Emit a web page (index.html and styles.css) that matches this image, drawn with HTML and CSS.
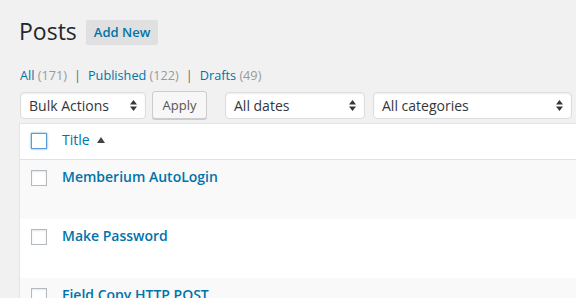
FILE: index.html
```html
<!DOCTYPE html>
<html>
<head>
<meta charset="utf-8">
<link rel="stylesheet" href="styles.css">
</head>
<body>
<div class="wrap">
  <div class="heading">
    <h1 class="page-title">Posts</h1>
    <a class="add-new">Add New</a>
  </div>
  <ul class="subsubsub">
    <li><a class="current">All <span class="count">(171)</span></a><span class="sep">|</span></li>
    <li><a>Published <span class="count">(122)</span></a><span class="sep">|</span></li>
    <li><a>Drafts <span class="count">(49)</span></a></li>
  </ul>
  <div class="tablenav">
    <div class="select w-bulk"><span>Bulk Actions</span><svg width="7" height="11" viewBox="0 0 7 11"><path d="M3.5 0L7 4.5H0z M3.5 11L0 6.5h7z" fill="#32373c"/></svg></div>
    <button class="button">Apply</button>
    <div class="select w-dates"><span>All dates</span><svg width="7" height="11" viewBox="0 0 7 11"><path d="M3.5 0L7 4.5H0z M3.5 11L0 6.5h7z" fill="#32373c"/></svg></div>
    <div class="select w-cats"><span>All categories</span><svg width="7" height="11" viewBox="0 0 7 11"><path d="M3.5 0L7 4.5H0z M3.5 11L0 6.5h7z" fill="#32373c"/></svg></div>
  </div>
  <div class="list-table">
    <div class="thead">
      <span class="cb cb-focus"></span>
      <a class="col-title">Title</a>
      <svg class="sort" width="8" height="6" viewBox="0 0 8 6"><path d="M4 0L8 6H0z" fill="#444"/></svg>
    </div>
    <div class="row alt">
      <span class="cb"></span>
      <a class="row-title">Memberium AutoLogin</a>
    </div>
    <div class="row">
      <span class="cb"></span>
      <a class="row-title">Make Password</a>
    </div>
    <div class="row alt">
      <span class="cb"></span>
      <a class="row-title">Field Copy HTTP POST</a>
    </div>
  </div>
</div>
</body>
</html>
```
FILE: styles.css
```css
html, body {
  margin: 0;
  padding: 0;
  background: #f1f1f1;
  font-family: "Open Sans", "Noto Sans", sans-serif;
  color: #444;
  overflow: hidden;
}
.wrap {
  padding: 0 0 0 19px;
  width: 620px;
}
.heading {
  display: flex;
  align-items: center;
  gap: 9px;
  padding-top: 17px;
  height: 29px;
}
.page-title {
  margin: 0;
  font-size: 23px;
  font-weight: 400;
  line-height: 29px;
  color: #23282d;
}
.add-new {
  display: block;
  background: #e0e0e0;
  color: #0073aa;
  font-size: 13px;
  font-weight: 600;
  line-height: 25px;
  height: 25px;
  padding: 0 8px;
  border-radius: 2px;
  margin-top: 1px;
}
.subsubsub {
  list-style: none;
  margin: 20px 0 0 1px;
  padding: 0;
  display: flex;
  font-size: 12.7px;
  line-height: 18px;
  height: 18px;
  color: #666;
}
.subsubsub a {
  color: #0073aa;
}
.subsubsub .count {
  color: #999;
}
.sep {
  padding: 0 7px 0 7px;
  color: #666;
}
.tablenav {
  display: flex;
  margin-top: 8px;
  margin-left: 1px;
  height: 28px;
}
.select {
  box-sizing: border-box;
  height: 27px;
  background: #fff;
  border: 1px solid #ddd;
  border-radius: 4px;
  box-shadow: inset 0 1px 2px rgba(0,0,0,0.07);
  display: flex;
  align-items: center;
  justify-content: space-between;
  padding: 0 8px 0 8px;
  font-size: 14px;
  color: #32373c;
}
.w-bulk { width: 126px; }
.w-dates { width: 140px; margin-left: 18px; }
.w-cats { width: 199px; margin-left: 8px; }
.button {
  box-sizing: border-box;
  margin-left: 6px;
  height: 28px;
  width: 55px;
  margin-top: -1px;
  padding: 0 0 1px;
  background: #f7f7f7;
  border: 1px solid #ccc;
  border-radius: 3px;
  box-shadow: 0 1px 0 #ccc;
  font-family: "Open Sans", "Noto Sans", sans-serif;
  font-size: 13px;
  color: #555;
}
.list-table {
  margin-top: 3px;
  background: #fff;
  border: 1px solid #e5e5e5;
  border-right: none;
  box-shadow: 0 1px 1px rgba(0,0,0,0.04);
}
.thead {
  display: flex;
  align-items: flex-start;
  height: 35px;
  border-bottom: 1px solid #e1e1e1;
}
.cb {
  box-sizing: border-box;
  display: block;
  flex: none;
  width: 16px;
  height: 16px;
  border: 1px solid #b4b9be;
  background: #fff;
  box-shadow: inset 0 1px 2px rgba(0,0,0,0.1);
  margin: 9px 0 0 11px;
}
.cb-focus {
  border-color: #5b9dd9;
  box-shadow: 0 0 2px rgba(30,140,190,0.8);
}
.col-title {
  margin: 6px 0 0 15px;
  font-size: 14px;
  line-height: 20px;
  color: #0073aa;
}
.sort {
  flex: none;
  margin: 13px 0 0 7px;
}
.row {
  display: flex;
  align-items: flex-start;
  height: 59px;
}
.row.alt {
  background: #f9f9f9;
}
.row .cb {
  margin-top: 10px;
}
.row-title {
  margin: 7px 0 0 15px;
  font-size: 14px;
  font-weight: 600;
  line-height: 20px;
  color: #0073aa;
}
```
